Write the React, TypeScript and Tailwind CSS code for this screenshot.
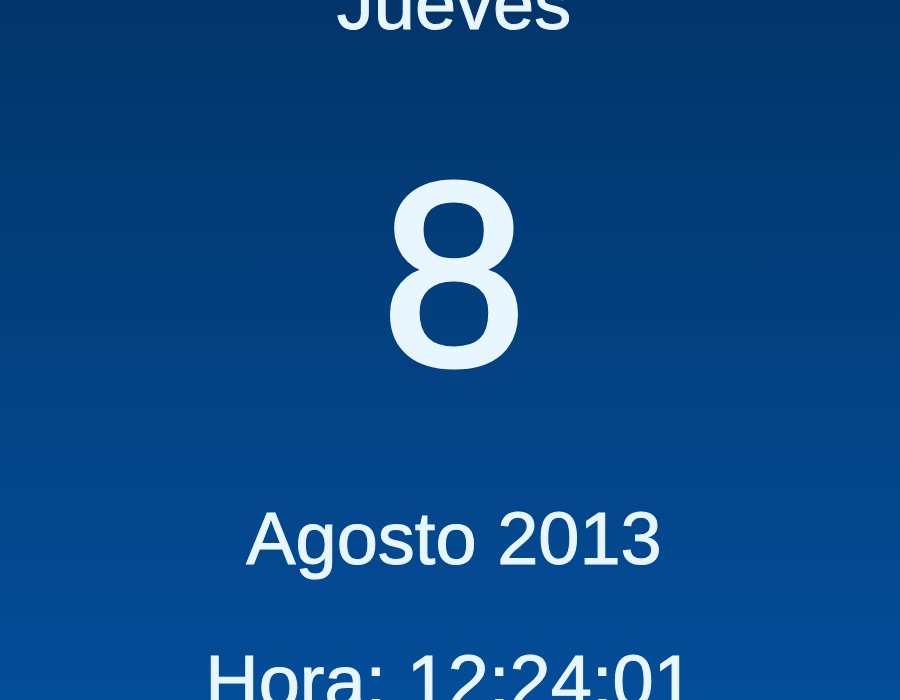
export default function App() {
  return (
    <div className="h-[700px] w-[900px] overflow-hidden bg-linear-to-b from-[#02356a] to-[#044d99] text-[#e8f7ff] [font-family:'Liberation_Sans',Arial,sans-serif]">
      <div className="flex flex-col items-center pl-[8px] [-webkit-text-stroke:1px_#e8f7ff]">
        <div className="mt-[-33px] text-[74px] leading-none">Jueves</div>
        <div className="mt-[103px] text-[260px] leading-none [-webkit-text-stroke:6px_#e8f7ff]">8</div>
        <div className="mt-[98px] text-[74px] leading-none">Agosto 2013</div>
        <div className="mt-[69px] pr-[8px] text-[74px] leading-none">Hora: 12:24:01</div>
      </div>
    </div>
  );
}
